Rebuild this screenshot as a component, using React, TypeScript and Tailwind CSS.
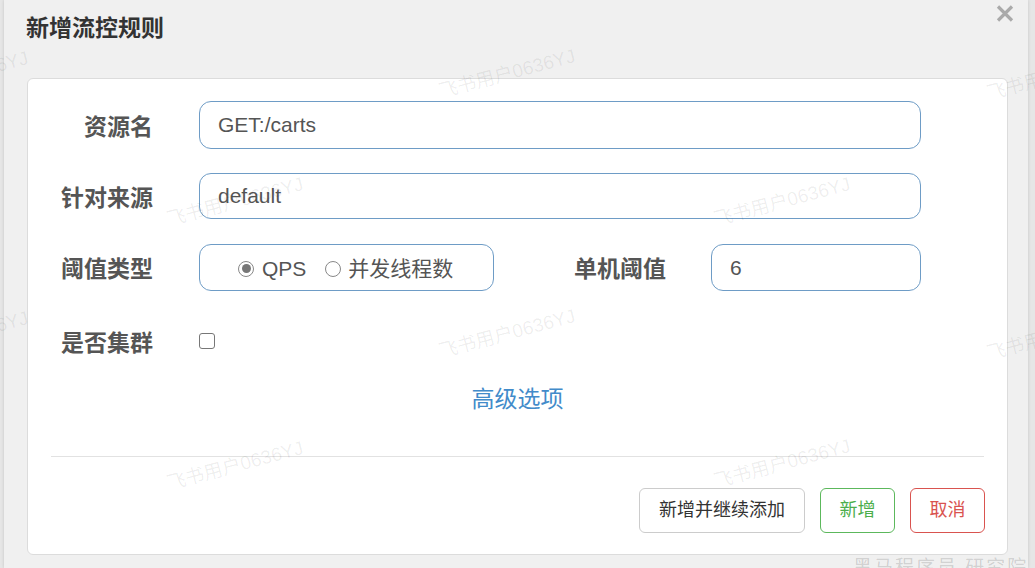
import React from 'react';

const FONT = { fontFamily: '"Liberation Sans", "Noto Sans CJK SC", sans-serif' };

// Watermark positions (left, top) in page px.
const MARKS: [number, number][] = [
  [-110, 62], [437, 60], [985, 62],
  [165, 188], [712, 188],
  [-110, 322], [437, 320], [985, 322],
  [165, 452], [712, 450],
];

function Label({ children, w = 'w-[125px]' }: { children: React.ReactNode; w?: string }) {
  return (
    <div className={`${w} shrink-0 pt-[4px] text-right text-[23px] font-bold leading-none text-[#555]`}>
      {children}
    </div>
  );
}

function Radio({ checked }: { checked?: boolean }) {
  return (
    <span className="flex h-[16px] w-[16px] items-center justify-center rounded-full border border-[#888] bg-white">
      {checked && <span className="h-[9px] w-[9px] rounded-full bg-[#777]" />}
    </span>
  );
}

export default function App() {
  return (
    <div className="relative flex h-[568px] w-[1035px] overflow-hidden bg-[#e6e6e6]" style={FONT}>
      <div className="ml-[4px] flex w-[1024px] flex-col bg-[#f0f0f0] shadow-[0_0_3px_rgba(0,0,0,0.15)]">
        {/* header */}
        <div className="relative h-[78px] shrink-0">
          <h3 className="pl-[22px] pt-[15px] text-[23px] font-bold leading-[26px] text-[#333]">新增流控规则</h3>
          <svg className="absolute right-[14px] top-[5px]" width="18" height="17" viewBox="0 0 18 17">
            <path d="M2 1.5L16 15.5M16 1.5L2 15.5" stroke="#aaa" strokeWidth="3.2" />
          </svg>
        </div>

        {/* body */}
        <div className="ml-[23px] mr-[20px] flex h-[477px] flex-col rounded-md border border-[#dcdcdc] bg-white">
          <div className="flex flex-col pt-[22px]">
            <div className="flex items-center gap-[46px]">
              <Label>资源名</Label>
              <div className="flex h-[48px] w-[722px] items-center rounded-xl border border-[#6e9cc6] px-[18px] text-[21px] text-[#555]">
                GET:/carts
              </div>
            </div>

            <div className="mt-[24px] flex items-center gap-[46px]">
              <Label>针对来源</Label>
              <div className="flex h-[46px] w-[722px] items-center rounded-xl border border-[#6e9cc6] px-[18px] text-[21px] text-[#555]">
                default
              </div>
            </div>

            <div className="mt-[25px] flex items-center">
              <Label>阈值类型</Label>
              <div className="ml-[46px] flex h-[47px] w-[295px] items-center rounded-xl border border-[#6e9cc6] pl-[38px] pt-[2px] text-[21px] text-[#555]">
                <Radio checked />
                <span className="ml-[8px]">QPS</span>
                <span className="ml-[19px]"><Radio /></span>
                <span className="ml-[7px]">并发线程数</span>
              </div>
              <Label w="w-[172px]">单机阈值</Label>
              <div className="ml-[45px] flex h-[47px] w-[210px] items-center rounded-xl border border-[#6e9cc6] px-[18px] text-[21px] text-[#555]">
                6
              </div>
            </div>

            <div className="mt-[26px] flex h-[48px] items-center gap-[46px]">
              <Label>是否集群</Label>
              <span className="h-[16px] w-[16px] rounded-[3px] border border-[#777] bg-white" />
            </div>

            <div className="mt-[19px] text-center text-[23px] leading-[30px] text-[#428bca]">
              高级选项
            </div>
          </div>

          <div className="mx-[23px] mt-[42px] border-t border-[#e2e2e2]" />

          <div className="flex justify-end gap-[15px] pr-[22px] pt-[31px]">
            <button className="h-[45px] w-[166px] rounded-md border border-[#ccc] bg-white text-[18px] text-[#333]">
              新增并继续添加
            </button>
            <button className="h-[45px] w-[75px] rounded-md border border-[#5cb85c] bg-white text-[18px] text-[#4cae4c]">
              新增
            </button>
            <button className="h-[45px] w-[75px] rounded-md border border-[#d9534f] bg-white text-[18px] text-[#d9534f]">
              取消
            </button>
          </div>
        </div>
      </div>

      {/* watermarks */}
      {MARKS.map(([x, y], i) => (
        <span
          key={i}
          className="pointer-events-none absolute -rotate-[15deg] whitespace-nowrap text-[19px] text-black/[0.07]"
          style={{ left: x, top: y }}
        >
          飞书用户0636YJ
        </span>
      ))}
      <span className="pointer-events-none absolute left-[853px] top-[554px] whitespace-nowrap text-[19px] tracking-[2px] text-black/[0.15]">
        黑马程序员 研究院
      </span>
    </div>
  );
}
